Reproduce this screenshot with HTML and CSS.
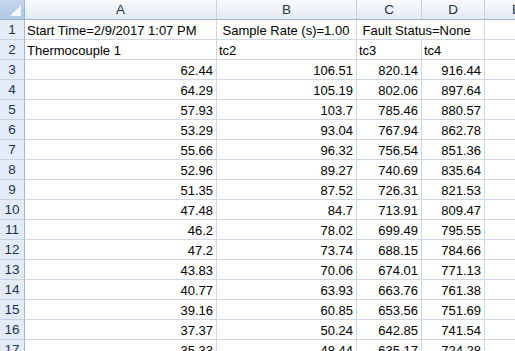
FILE: index.html
```html
<!DOCTYPE html>
<html lang="en">

<head>
    <meta charset="UTF-8">
    <title>Thermocouple log</title>
    <link rel="stylesheet" href="styles.css">
</head>

<body>
    <div class="sheet" id="sheet">
        <div class="corner"><span class="tri"></span></div>
        <div class="col-head">A</div>
        <div class="col-head">B</div>
        <div class="col-head">C</div>
        <div class="col-head">D</div>
        <div class="col-head">E</div>

        <div class="row-head">1</div>
        <div class="cell">Start Time=2/9/2017 1:07 PM</div>
        <div class="cell">&nbsp;Sample Rate (s)=1.00</div>
        <div class="cell span2">&nbsp;Fault Status=None</div>
        <div class="cell"></div>

        <div class="row-head">2</div>
        <div class="cell">Thermocouple 1</div>
        <div class="cell">tc2</div>
        <div class="cell">tc3</div>
        <div class="cell">tc4</div>
        <div class="cell"></div>
    </div>
    <script>
        const data = [
            ['62.44', '106.51', '820.14', '916.44'],
            ['64.29', '105.19', '802.06', '897.64'],
            ['57.93', '103.7', '785.46', '880.57'],
            ['53.29', '93.04', '767.94', '862.78'],
            ['55.66', '96.32', '756.54', '851.36'],
            ['52.96', '89.27', '740.69', '835.64'],
            ['51.35', '87.52', '726.31', '821.53'],
            ['47.48', '84.7', '713.91', '809.47'],
            ['46.2', '78.02', '699.49', '795.55'],
            ['47.2', '73.74', '688.15', '784.66'],
            ['43.83', '70.06', '674.01', '771.13'],
            ['40.77', '63.93', '663.76', '761.38'],
            ['39.16', '60.85', '653.56', '751.69'],
            ['37.37', '50.24', '642.85', '741.54'],
            ['35.33', '48.44', '635.17', '724.28']
        ];

        const sheet = document.getElementById('sheet');

        data.forEach(function (row, i) {
            const head = document.createElement('div');
            head.className = 'row-head';
            head.textContent = i + 3;
            sheet.appendChild(head);

            row.forEach(function (value) {
                const cell = document.createElement('div');
                cell.className = 'cell num';
                cell.textContent = value;
                sheet.appendChild(cell);
            });

            const empty = document.createElement('div');
            empty.className = 'cell';
            sheet.appendChild(empty);
        });
    </script>
</body>

</html>
```

FILE: styles.css
```css
html,
body {
    margin: 0;
    background: #fff;
    overflow: hidden;
}

.sheet {
    display: grid;
    grid-template-columns: 25px 192px 140px 65px 63px 64px;
    grid-auto-rows: 20px;
    font-family: "Liberation Sans", Arial, sans-serif;
    font-size: 13px;
    color: #000;
}

.sheet > div {
    box-sizing: border-box;
    white-space: nowrap;
    overflow: hidden;
}

.corner {
    position: relative;
    background: linear-gradient(#c6d7ee, #aec6e6);
    border-right: 1px solid #9eb6ce;
    border-bottom: 1px solid #9eb6ce;
}

.tri {
    position: absolute;
    right: 3px;
    bottom: 3px;
    width: 0;
    height: 0;
    border-left: 11px solid transparent;
    border-bottom: 11px solid #f4f8fd;
}

.col-head {
    background: linear-gradient(#f9fbfd, #e4eaf3);
    border-right: 1px solid #c5d2e3;
    border-bottom: 1px solid #9eb6ce;
    text-align: center;
    line-height: 19px;
    font-size: 13.5px;
    color: #27323f;
}

.row-head {
    background: #e4ecf7;
    border-right: 1px solid #9eb6ce;
    border-bottom: 1px solid #c5d2e3;
    text-align: center;
    line-height: 20px;
    font-size: 13.5px;
    color: #1e3350;
}

.cell {
    border-right: 1px solid #d0d7e5;
    border-bottom: 1px solid #d0d7e5;
    padding: 0 3px 0 2px;
    line-height: 21px;
}

.span2 {
    grid-column: span 2;
}

.num {
    text-align: right;
}
```
